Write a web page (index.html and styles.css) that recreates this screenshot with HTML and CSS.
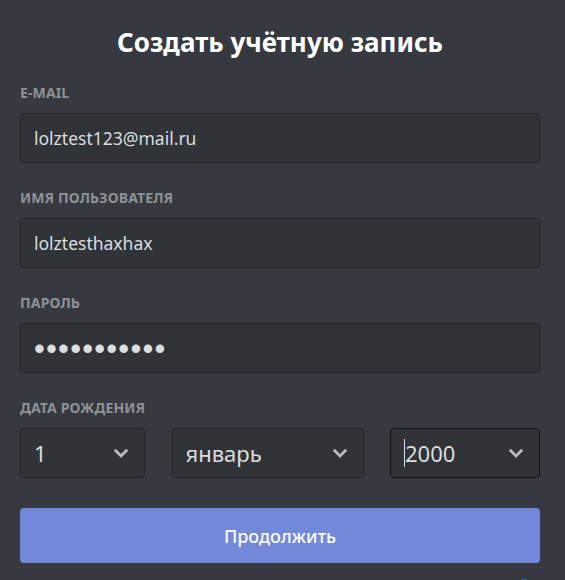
FILE: index.html
```html
<!DOCTYPE html>
<html lang="ru">
<head>
<meta charset="utf-8">
<title>Создать учётную запись</title>
<link rel="stylesheet" href="styles.css">
</head>
<body>
<form class="auth">
  <h1 class="title">Создать учётную запись</h1>

  <div class="field">
    <div class="label">E-mail</div>
    <div class="input">lolztest123@mail.ru</div>
  </div>

  <div class="field">
    <div class="label">Имя пользователя</div>
    <div class="input">lolztesthaxhax</div>
  </div>

  <div class="field">
    <div class="label">Пароль</div>
    <div class="input"><span class="dots">•••••••••••</span></div>
  </div>

  <div class="field">
    <div class="label">Дата рождения</div>
    <div class="dob">
      <div class="select">
        <span class="value">1</span>
        <svg class="chev" width="16" height="10" viewBox="0 0 16 10"><path d="M1.8 1.8 L8 8 L14.2 1.8" fill="none" stroke="#b9bbbe" stroke-width="2.8"/></svg>
      </div>
      <div class="select">
        <span class="value">январь</span>
        <svg class="chev" width="16" height="10" viewBox="0 0 16 10"><path d="M1.8 1.8 L8 8 L14.2 1.8" fill="none" stroke="#b9bbbe" stroke-width="2.8"/></svg>
      </div>
      <div class="select focused">
        <span class="value"><span class="caret"></span>2000</span>
        <svg class="chev" width="16" height="10" viewBox="0 0 16 10"><path d="M1.8 1.8 L8 8 L14.2 1.8" fill="none" stroke="#b9bbbe" stroke-width="2.8"/></svg>
      </div>
    </div>
  </div>

  <button type="button" class="button">Продолжить</button>

  <p class="terms">Нажимая, вы соглашаетесь с <a class="link">Условиями использования</a> и <a class="link">Политикой конфиденциальности</a> Discord.</p>
</form>
</body>
</html>
```

FILE: styles.css
```css
html, body {
  margin: 0;
  padding: 0;
  background: #36393f;
  font-family: "Noto Sans", "Open Sans", sans-serif;
  overflow: hidden;
}

.auth {
  padding: 24px 25px 0 20px;
  display: flex;
  flex-direction: column;
}

.title {
  margin: 0 0 23px;
  height: 36px;
  line-height: 36px;
  font-size: 26px;
  font-weight: 700;
  color: #ffffff;
  text-align: center;
}

.field {
  margin-bottom: 25px;
}

.label {
  height: 20px;
  line-height: 20px;
  margin-bottom: 10px;
  font-size: 14px;
  font-weight: 700;
  letter-spacing: 0.01em;
  text-transform: uppercase;
  color: #8e9297;
}

.input,
.select {
  box-sizing: border-box;
  height: 50px;
  border: 1px solid rgba(0, 0, 0, 0.3);
  background: rgba(0, 0, 0, 0.1);
  border-radius: 4px;
  color: #dcddde;
  display: flex;
  align-items: center;
}

.input {
  padding: 0 13px;
  font-size: 17.5px;
}

.dots {
  font-family: "Liberation Sans", sans-serif;
  font-size: 31px;
  letter-spacing: 1.2px;
  color: #dcddde;
  line-height: 1;
}

.dob {
  display: grid;
  grid-template-columns: 125px 192px 150px;
  justify-content: space-between;
}

.select {
  padding: 0 15px 0 13px;
  justify-content: space-between;
  font-size: 22px;
  font-weight: 400;
}

.select.focused {
  border-color: #121315;
}

.value {
  display: flex;
  align-items: center;
}

.caret {
  display: inline-block;
  width: 1px;
  height: 28px;
  background: #dcddde;
}

.chev {
  display: block;
}

.button {
  margin-top: 5px;
  height: 55px;
  border: none;
  border-radius: 4px;
  background: #7289da;
  color: #ffffff;
  font-family: "Noto Sans", "Open Sans", sans-serif;
  font-size: 18px;
  font-weight: 500;
  padding: 0;
}

.terms {
  margin: 11px 0 0;
  font-size: 15px;
  line-height: 20px;
  color: #72767d;
}

.link {
  color: #00b0f4;
}
```
